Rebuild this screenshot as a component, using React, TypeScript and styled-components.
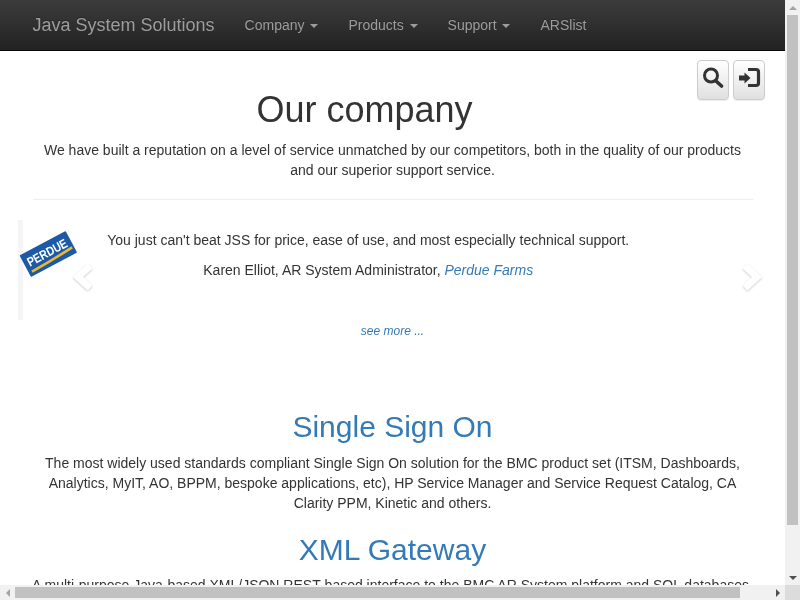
import React from "react";
import styled, { createGlobalStyle } from "styled-components";

const Global = createGlobalStyle`
  html, body { height: 100%; overflow: hidden; }
  body {
    margin: 0;
    font-family: "Liberation Sans", Arial, sans-serif;
    font-size: 14px;
    line-height: 20px;
    color: #333;
    background: #fff;
  }
`;

const Shell = styled.div`
  display: grid;
  grid-template-columns: 1fr 15px;
  grid-template-rows: 1fr 15px;
  height: 100vh;
  width: 100vw;
`;
const Viewport = styled.div`
  position: relative;
  overflow: hidden;
  min-height: 0;
  min-width: 0;
`;
const ScrollContent = styled.div`
  position: relative;
  height: 637px;
  background: #fff;
  will-change: transform;
`;
const VerticalBar = styled.div`
  display: flex;
  flex-direction: column;
  align-items: center;
  background: #f1f1f1;
`;
const HorizontalBar = styled.div`
  display: flex;
  align-items: center;
  background: #f1f1f1;
`;
const ArrowCell = styled.div`
  flex: none;
  width: 15px;
  height: 15px;
  display: flex;
  align-items: center;
  justify-content: center;
`;
const Track = styled.div`
  flex: 1;
  display: flex;
  min-width: 0;
  min-height: 0;
`;
const VerticalThumb = styled.div`
  width: 11px;
  height: 510px;
  background: #c1c1c1;
`;
const HorizontalThumb = styled.div`
  width: 725px;
  height: 11px;
  background: #c1c1c1;
`;
const Corner = styled.div`
  background: #dcdcdc;
`;
const ArrowUp = styled.span`
  border-left: 4px solid transparent;
  border-right: 4px solid transparent;
  border-bottom: 4px solid #a3a3a3;
`;
const ArrowDown = styled.span`
  border-left: 4px solid transparent;
  border-right: 4px solid transparent;
  border-top: 4px solid #505050;
`;
const ArrowLeft = styled.span`
  border-top: 4px solid transparent;
  border-bottom: 4px solid transparent;
  border-right: 4px solid #a3a3a3;
`;
const ArrowRight = styled.span`
  border-top: 4px solid transparent;
  border-bottom: 4px solid transparent;
  border-left: 4px solid #505050;
`;

const Navbar = styled.nav`
  height: 50px;
  border-bottom: 1px solid #080808;
  background: linear-gradient(to bottom, #3c3c3c 0%, #222 100%);
`;
const NavInner = styled.div`
  width: 750px;
  margin: 0 auto;
  padding: 0 15px;
  box-sizing: border-box;
  display: flex;
`;
const Brand = styled.a`
  font-size: 18px;
  line-height: 20px;
  padding: 15px 15px 15px 0;
  color: #9d9d9d;
  text-shadow: 0 -1px 0 rgba(0, 0, 0, 0.25);
`;
const NavItem = styled.a`
  padding: 15px;
  color: #9d9d9d;
  text-shadow: 0 -1px 0 rgba(0, 0, 0, 0.25);
`;
const Caret = styled.span`
  display: inline-block;
  width: 0;
  height: 0;
  margin-left: 2px;
  vertical-align: middle;
  border-top: 4px solid #9d9d9d;
  border-right: 4px solid transparent;
  border-left: 4px solid transparent;
`;
const Tools = styled.div`
  position: absolute;
  top: 60px;
  left: 697px;
  display: flex;
  gap: 4px;
  z-index: 2;
`;
const ToolButton = styled.button`
  width: 32px;
  height: 40px;
  display: flex;
  align-items: flex-start;
  justify-content: center;
  padding: 5px 0 0;
  box-sizing: border-box;
  border: 1px solid #ccc;
  border-radius: 4px;
  background: linear-gradient(to bottom, #fff 0%, #e0e0e0 100%);
  box-shadow: inset 0 1px 0 rgba(255, 255, 255, 0.15), 0 1px 1px rgba(0, 0, 0, 0.075);
`;
const Container = styled.main`
  width: 750px;
  margin: 0 auto;
  padding: 19.4px 15px 0;
  box-sizing: border-box;
`;
const Title = styled.h1`
  margin: 20px 0 10px;
  padding-right: 56px;
  font-size: 36px;
  font-weight: 500;
  line-height: 39.6px;
  text-align: center;
`;
const Lead = styled.p`
  margin: 0 0 10px;
  text-align: center;
`;
const Rule = styled.hr`
  margin: 19px 0 20px;
  border: 0;
  border-top: 1px solid #eee;
`;
const Carousel = styled.section`
  position: relative;
  margin: 0 -15px;
  height: 100px;
  display: flex;
`;
const Bar = styled.div`
  width: 5px;
  margin-left: 0.5px;
  background: #f5f5f5;
  flex: none;
`;
const Logo = styled.svg`
  width: 64px;
  height: 49px;
  margin-top: 10.5px;
  margin-left: -6px;
  flex: none;
`;
const Quote = styled.div`
  flex: 1;
  padding: 10px 113px 0 0;
  margin-left: 1px;
  text-align: center;
  p {
    margin: 0 0 10px;
  }
  a {
    color: #337ab7;
    font-style: italic;
  }
`;
const Chevron = styled.svg<{ $side: "left" | "right" }>`
  position: absolute;
  top: 41px;
  ${(p) => (p.$side === "left" ? "left: 54px;" : "right: 5px;")}
  width: 24px;
  height: 32px;
  filter: drop-shadow(0 1px 1px rgba(0, 0, 0, 0.2));
`;
const More = styled.a`
  display: block;
  margin-top: 1px;
  font-size: 12px;
  font-style: italic;
  color: #337ab7;
  text-align: center;
`;
const Heading = styled.h2<{ $top: number; $bottom: number }>`
  margin: ${(p) => p.$top}px 0 ${(p) => p.$bottom}px;
  font-size: 30px;
  font-weight: 500;
  line-height: 33px;
  color: #337ab7;
  text-align: center;
`;
const Body = styled.p<{ $pullLeft?: number }>`
  margin: 0 0 10px ${(p) => -(p.$pullLeft ?? 0)}px;
  text-align: center;
`;

export default function App() {
  return (
    <>
      <Global />
      <Shell>
        <Viewport>
          <ScrollContent>
            <Navbar>
              <NavInner>
                <Brand>Java System Solutions</Brand>
                <NavItem>Company <Caret /></NavItem>
                <NavItem>Products <Caret /></NavItem>
                <NavItem>Support <Caret /></NavItem>
                <NavItem>ARSlist</NavItem>
              </NavInner>
            </Navbar>
            <Tools>
              <ToolButton aria-label="Search">
                <svg width="22" height="24" viewBox="0 0 22 24">
                  <circle cx="9" cy="9.5" r="6.5" fill="none" stroke="#333" strokeWidth="3" />
                  <path d="M14 15 L19.5 20" stroke="#333" strokeWidth="3.6" strokeLinecap="round" />
                </svg>
              </ToolButton>
              <ToolButton aria-label="Log in">
                <svg width="24" height="24" viewBox="0 0 24 24">
                  <path d="M11 3.5 H19 Q21.5 3.5 21.5 6 V17 Q21.5 19.5 19 19.5 H11" fill="none" stroke="#333" strokeWidth="3.2" />
                  <path d="M2 9.5 H7.5 V6.5 L13.5 12 L7.5 17.5 V14.5 H2 Z" fill="#333" />
                </svg>
              </ToolButton>
            </Tools>
            <Container>
              <Title>Our company</Title>
              <Lead>
                We have built a reputation on a level of service unmatched by our competitors, both in the quality of our
                products and our superior support service.
              </Lead>
              <Rule />
              <Carousel>
                <Bar />
                <Logo viewBox="0 0 60 46">
                  <g transform="rotate(-28 29.3 22.5)">
                    <rect x="4.8" y="11" width="49" height="23" rx="1" fill="#1a5aa6" />
                    <text x="29" y="25" textAnchor="middle" fontFamily="Liberation Sans" fontWeight="700" fontSize="12" fill="#fff" textLength="41" lengthAdjust="spacingAndGlyphs">PERDUE</text>
                    <path d="M8 30 Q30 29.5 52 27.5" fill="none" stroke="#f2b632" strokeWidth="2.4" />
                  </g>
                </Logo>
                <Quote>
                  <p>You just can't beat JSS for price, ease of use, and most especially technical support.</p>
                  <p>Karen Elliot, AR System Administrator, <a>Perdue Farms</a></p>
                </Quote>
                <Chevron $side="left" viewBox="0 0 24 32">
                  <path d="M18 5 L6 16 L18 27" fill="none" stroke="#fff" strokeWidth="7" />
                </Chevron>
                <Chevron $side="right" viewBox="0 0 24 32">
                  <path d="M6 5 L18 16 L6 27" fill="none" stroke="#fff" strokeWidth="7" />
                </Chevron>
              </Carousel>
              <More>see more ...</More>
              <Heading $top={69} $bottom={10}>Single Sign On</Heading>
              <Body>
                The most widely used standards compliant Single Sign On solution for the BMC product set (ITSM, Dashboards,
                Analytics, MyIT, AO, BPPM, bespoke applications, etc), HP Service Manager and Service Request Catalog, CA
                Clarity PPM, Kinetic and others.
              </Body>
              <Heading $top={20} $bottom={9}>XML Gateway</Heading>
              <Body $pullLeft={4}>
                A multi-purpose Java-based XML/JSON REST-based interface to the BMC AR System platform and SQL databases
              </Body>
            </Container>
          </ScrollContent>
        </Viewport>
        <VerticalBar>
          <ArrowCell><ArrowUp /></ArrowCell>
          <Track><VerticalThumb /></Track>
          <ArrowCell><ArrowDown /></ArrowCell>
        </VerticalBar>
        <HorizontalBar>
          <ArrowCell><ArrowLeft /></ArrowCell>
          <Track><HorizontalThumb /></Track>
          <ArrowCell><ArrowRight /></ArrowCell>
        </HorizontalBar>
        <Corner />
      </Shell>
    </>
  );
}
